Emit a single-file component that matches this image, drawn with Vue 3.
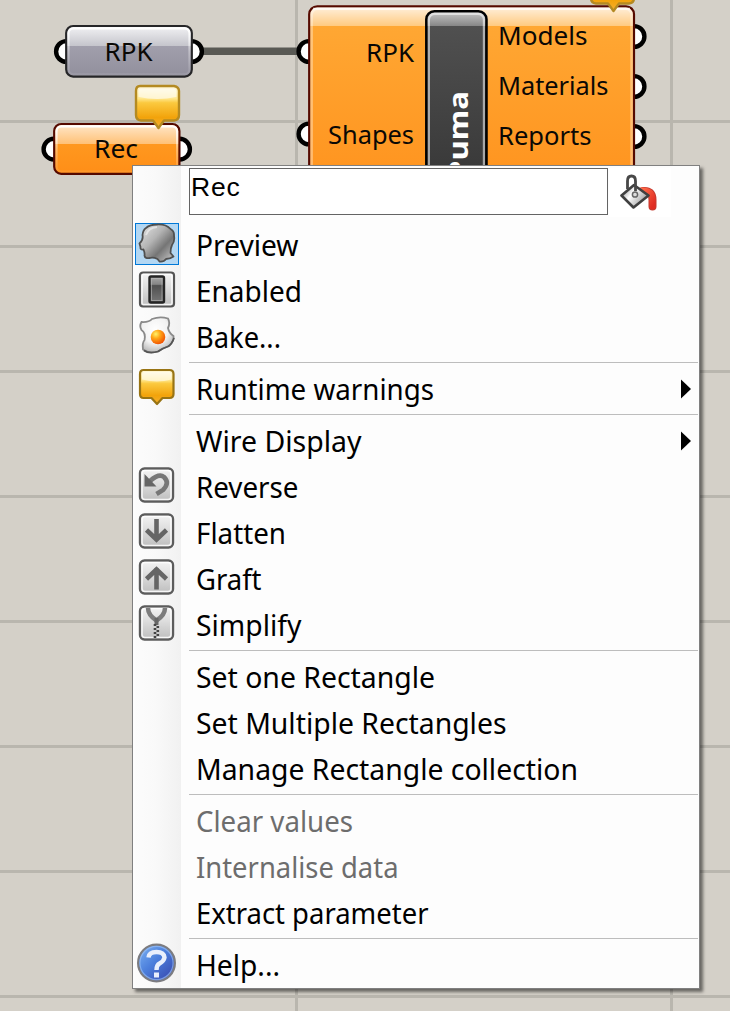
<script setup>
const gridRows = [121.5, 246.5, 371.5, 496.5, 621.5, 746.5, 871.5, 996.5]
const gridCols = [296.5, 671.5]
const ports = [
  [66.5, 51.5], [191.5, 51.5], [54, 149.2], [179.5, 149.2],
  [309, 51.5], [309, 134], [634, 36.5], [634, 86.5], [634, 136.5],
]
const groups = [
  [
    { text: 'Preview', end: 297.5, icon: 'head', checked: true },
    { text: 'Enabled', end: 301, icon: 'switch' },
    { text: 'Bake...', end: 280, icon: 'egg' },
  ],
  [{ text: 'Runtime warnings', end: 433, icon: 'balloon', sub: true }],
  [
    { text: 'Wire Display', end: 360.5, sub: true },
    { text: 'Reverse', end: 297.5, icon: 'reverse' },
    { text: 'Flatten', end: 285, icon: 'down' },
    { text: 'Graft', end: 260.5, icon: 'up' },
    { text: 'Simplify', end: 300.5, icon: 'zip' },
  ],
  [
    { text: 'Set one Rectangle', end: 434 },
    { text: 'Set Multiple Rectangles', end: 505.5 },
    { text: 'Manage Rectangle collection', end: 577 },
  ],
  [
    { text: 'Clear values', end: 352, off: true },
    { text: 'Internalise data', end: 397.5, off: true },
    { text: 'Extract parameter', end: 427.5 },
  ],
  [{ text: 'Help...', end: 279, icon: 'help' }],
]
</script>

<template>
  <main class="stage">
    <svg class="canvas" width="730" height="1011" viewBox="0 0 730 1011">
      <defs>
        <linearGradient id="grey" x2="0" y2="1">
          <stop offset="0" stop-color="#f3f3f5" /><stop offset=".4" stop-color="#c4c4cb" />
          <stop offset=".4" stop-color="#a19fac" /><stop offset="1" stop-color="#918f9c" />
        </linearGradient>
        <linearGradient id="orange" x2="0" y2="1">
          <stop offset="0" stop-color="#ffe8cc" /><stop offset=".4" stop-color="#ffc176" />
          <stop offset=".4" stop-color="#ff981f" /><stop offset="1" stop-color="#ff8e17" />
        </linearGradient>
        <linearGradient id="body" gradientUnits="userSpaceOnUse" x1="0" y1="6" x2="0" y2="180">
          <stop offset="0" stop-color="#fff2e1" /><stop offset=".115" stop-color="#ffca80" />
          <stop offset=".115" stop-color="#ffa733" /><stop offset="1" stop-color="#ff941f" />
        </linearGradient>
        <linearGradient id="dark" gradientUnits="userSpaceOnUse" x1="0" y1="12" x2="0" y2="180">
          <stop offset="0" stop-color="#c6c6c6" /><stop offset=".085" stop-color="#858585" />
          <stop offset=".085" stop-color="#505050" /><stop offset="1" stop-color="#383838" />
        </linearGradient>
        <linearGradient id="rim" x2="0" y2="1">
          <stop offset="0" stop-color="#fff" /><stop offset=".5" stop-color="#fff" stop-opacity=".35" /><stop offset="1" stop-color="#fff" stop-opacity=".08" />
        </linearGradient>
        <linearGradient id="gold" x2="0" y2="1">
          <stop offset="0" stop-color="#fff8dc" /><stop offset=".3" stop-color="#ffe68a" />
          <stop offset=".4" stop-color="#fbc93f" /><stop offset=".75" stop-color="#f2a30b" /><stop offset="1" stop-color="#f5b030" />
        </linearGradient>
        <linearGradient id="silver" x2="1" y2="1">
          <stop offset="0" stop-color="#e8e8e8" /><stop offset=".4" stop-color="#b4b4b4" /><stop offset=".65" stop-color="#757575" /><stop offset="1" stop-color="#d0d0d0" />
        </linearGradient>
        <linearGradient id="tile" x2="0" y2="1">
          <stop offset="0" stop-color="#f4f4f4" /><stop offset=".45" stop-color="#ddd" /><stop offset="1" stop-color="#bdbdbd" />
        </linearGradient>
        <linearGradient id="slot" x2="0" y2="1">
          <stop offset="0" stop-color="#aaa" /><stop offset=".3" stop-color="#858585" /><stop offset=".35" stop-color="#505050" /><stop offset="1" stop-color="#777" />
        </linearGradient>
        <radialGradient id="white" cx=".45" cy=".35" r=".65">
          <stop offset="0" stop-color="#fff" /><stop offset=".6" stop-color="#f2f2f2" /><stop offset="1" stop-color="#bbb" />
        </radialGradient>
        <linearGradient id="paint" x2="1" y2=".6">
          <stop offset="0" stop-color="#777" /><stop offset=".45" stop-color="#fff" /><stop offset="1" stop-color="#999" />
        </linearGradient>
        <radialGradient id="yolk" cx=".35" cy=".3" r=".75">
          <stop offset="0" stop-color="#fff36a" /><stop offset=".4" stop-color="#ffa817" /><stop offset="1" stop-color="#f04c00" />
        </radialGradient>
        <linearGradient id="blue" x2="1" y2="1">
          <stop offset="0" stop-color="#7fb6f5" /><stop offset=".45" stop-color="#4c7fdc" /><stop offset="1" stop-color="#3440a8" />
        </linearGradient>
        <linearGradient id="red" x2="1" y2="1">
          <stop offset="0" stop-color="#ff6a48" /><stop offset="1" stop-color="#e02c22" />
        </linearGradient>
      </defs>
      <g stroke="#b9b6ae" stroke-width="3">
        <path v-for="y in gridRows" :key="y" :d="`M0 ${y}H730`" />
        <path v-for="x in gridCols" :key="x" :d="`M${x} 0V1011`" />
      </g>
      <path d="M200 51.3H300" stroke="#595954" stroke-width="7.4" />
      <circle v-for="(p, i) in ports" :key="i" :cx="p[0]" :cy="p[1]" r="10.4" fill="#fff" stroke="#000" stroke-width="4.4" />

      <rect x="66.2" y="26" width="125.6" height="50.6" rx="7" fill="url(#grey)" stroke="#262628" stroke-width="2.2" />
      <rect x="68.5" y="28.3" width="121" height="46" rx="5" fill="none" stroke="url(#rim)" stroke-width="2.2" />
      <rect x="54.2" y="124" width="125.2" height="49.8" rx="7" fill="url(#orange)" stroke="#550a00" stroke-width="2.2" />
      <rect x="56.5" y="126.3" width="120.6" height="45.2" rx="5" fill="none" stroke="url(#rim)" stroke-width="2.2" />
      <rect x="309.2" y="6.3" width="324.8" height="190" rx="8" fill="url(#body)" stroke="#550a00" stroke-width="2.2" />
      <rect x="311.6" y="8.7" width="320" height="186" rx="6" fill="none" stroke="#fff" stroke-opacity=".36" stroke-width="2.6" />
      <path d="M313 8.8H630" stroke="#fff" stroke-width="2" opacity=".7" />
      <rect x="426.3" y="11.3" width="60.2" height="190" rx="8" fill="url(#dark)" stroke="#000" stroke-width="2.5" />
      <rect x="428.9" y="13.8" width="55" height="186" rx="6" fill="none" stroke="#fff" stroke-opacity=".55" stroke-width="2.2" />

      <g class="node-text">
        <text x="104.5" y="60.5" textLength="48" lengthAdjust="spacingAndGlyphs">RPK</text>
        <text x="94" y="158" textLength="44" lengthAdjust="spacingAndGlyphs">Rec</text>
        <text x="366" y="61.5" textLength="48" lengthAdjust="spacingAndGlyphs">RPK</text>
        <text x="328" y="144" textLength="86" lengthAdjust="spacingAndGlyphs">Shapes</text>
        <text x="498" y="45.3" textLength="89.500" lengthAdjust="spacingAndGlyphs">Models</text>
        <text x="498" y="95.3" textLength="110.500" lengthAdjust="spacingAndGlyphs">Materials</text>
        <text x="498" y="145.3" textLength="93.500" lengthAdjust="spacingAndGlyphs">Reports</text>
      </g>
      <text class="puma" transform="translate(467.6 180) rotate(-90)" textLength="89" lengthAdjust="spacingAndGlyphs">Puma</text>
      <g class="soft" fill="url(#gold)" stroke="#b48a22" stroke-width="2.4" stroke-linejoin="round">
        <path d="M140 86H174Q179 87 179 91V115Q179 120 174 120.5H164L158.5 128L153 120.5H141Q136 120 136 115V91Q136 86 140 86Z" />
        <path d="M594 -31H629Q634 -30 634 -26V-2Q634 3 629 3.5H619L613.5 11L608 3.5H596Q591 3 591 -2V-26Q591 -31 594 -31Z" />
      </g>
      <path d="M141 88.5H174Q176.5 89 176.5 92V97Q157 101 138.5 97V91Q138.5 88.5 141 88.5Z" fill="#fff" opacity=".6" />
    </svg>

    <section class="menu">
      <header class="head">
        <div class="field">Rec</div>
        <svg class="bucket" width="62" height="49" viewBox="609 168 62 49">
          <g class="soft">
            <path d="M643 191Q652.500 190 652.500 200V206.500" fill="none" stroke="#c43a30" stroke-width="8" stroke-linecap="round" />
            <path d="M641 190.500Q652.500 189.500 652.500 200V206.500" fill="none" stroke="url(#red)" stroke-width="6" stroke-linecap="round" />
            <path d="M634 185L648.500 195.500L633.500 207.500L621.500 195.500Z" fill="url(#paint)" stroke="#404040" stroke-width="2.600" stroke-linejoin="round" />
            <path d="M627.500 189V181Q627.500 176 631.500 176Q635.500 176 635.500 181V191" fill="none" stroke="#484848" stroke-width="2.800" />
            <circle cx="635" cy="194.500" r="2.600" fill="#ddd" stroke="#666" stroke-width="1.500" />
          </g>
        </svg>
      </header>
      <div v-for="(group, g) in groups" :key="g" class="group">
        <div v-for="item in group" :key="item.text" class="item" :class="{ off: item.off }">
          <div class="slot" :class="{ checked: item.checked }">
            <svg v-if="item.icon" class="soft" width="44" height="44" viewBox="0 0 44 44">
              <g v-if="item.icon === 'head'">
                <path d="M11 5Q15 1.500 22 1.500Q31 1 35.500 6Q39.500 8 39 13Q40 18 37 22Q35.500 25 35.500 30L38.500 33.500Q35 36 31 36Q29 39 24.500 38.500L22.500 36Q18 34 15 35Q10 36 9.500 32.500Q10 30 8.500 26.500Q5 27 5.500 24L4.500 20.500Q8.500 17 7.500 12Q8 7 11 5Z" fill="url(#silver)" stroke="#505050" stroke-width="1.800" stroke-linejoin="round" />
                <path d="M11 12Q13 5 22 4" fill="none" stroke="#eee" stroke-width="1.800" opacity=".7" />
              </g>
              <g v-else-if="item.icon === 'switch'">
                <rect x="5" y="3.500" width="34" height="34" rx="3" fill="url(#tile)" stroke="#555" stroke-width="2.200" />
                <rect x="7" y="5.500" width="30" height="30" rx="1.500" fill="none" stroke="#fff" stroke-width="1.600" opacity=".8" />
                <rect x="14.500" y="7.500" width="14.500" height="26" rx="1.500" fill="url(#slot)" stroke="#252525" stroke-width="2.400" />
                <rect x="16.500" y="9.500" width="10.500" height="22" fill="none" stroke="#bbb" stroke-width="1" opacity=".6" />
              </g>
              <g v-else-if="item.icon === 'egg'">
                <path d="M6.500 7Q14 7.500 17 4Q25 1 33 3.500Q35.500 8 33 13Q34 18 38.500 21Q39.500 26 34 31Q28 33 23 36.500Q14 39 8 34.500Q7 28 9.500 25Q11 18 6.500 15Q4 11 6.500 7Z" fill="url(#white)" stroke="#8a8a8a" stroke-width="1.800" />
                <path d="M39 23Q37 29 33 31.500Q28 33 23 36.500Q14 39 9 35.500" fill="none" stroke="#555" stroke-width="1.800" />
                <circle cx="23" cy="22" r="7.300" fill="url(#yolk)" />
              </g>
              <g v-else-if="item.icon === 'balloon'">
                <path d="M8.500 3H34.500Q38.500 3 38.500 7V27Q38.500 31 34.500 31H27.500L22 37L16.500 31H8.500Q5 31 5 27V7Q5 3 8.500 3Z" fill="url(#gold)" stroke="#987414" stroke-width="2.200" stroke-linejoin="round" />
                <path d="M9 5H34.500Q36.500 5.500 36.500 7.500V12.500Q22 16.500 7 12.500V7.500Q7 5 9 5Z" fill="#fff" opacity=".55" />
              </g>
              <g v-else-if="item.icon === 'help'">
                <circle cx="21.500" cy="20" r="18.400" fill="url(#blue)" stroke="#7c7c80" stroke-width="2.200" />
                <circle cx="21.500" cy="20" r="16.600" fill="none" stroke="#9bc0f5" stroke-width="1.200" opacity=".65" />
                <path d="M13.500 14.500Q14 9 21.500 9Q29 9 29.500 14.500Q29 18 24.500 20.500Q21.500 22 21.500 27" fill="none" stroke="#e9effc" stroke-width="4.400" />
                <rect x="19" y="29.500" width="5" height="5" fill="#e9effc" />
              </g>
              <g v-else>
                <rect x="5" y="3.500" width="33" height="33" rx="4.500" fill="url(#tile)" stroke="#5c5c5c" stroke-width="2.400" />
                <rect x="7" y="5.500" width="29" height="29" rx="3" fill="none" stroke="#fff" stroke-width="1.600" opacity=".85" />
                <g fill="none" stroke="#656565" stroke-width="4.600">
                  <path v-if="item.icon === 'down'" d="M21.500 8V29M11.500 19L21.500 28.500L31.500 19" />
                  <path v-if="item.icon === 'up'" d="M21.500 32.500V11M11.500 22L21.500 12.500L31.500 22" />
                  <g v-if="item.icon === 'reverse'">
                    <path d="M15 16Q24 8 29 12Q35 18 28 25L21.500 29" stroke="#777" />
                    <path d="M9.500 9V21.500H21.500Z" fill="#666" stroke="none" />
                  </g>
                  <g v-if="item.icon === 'zip'">
                    <path d="M13 5Q13 12 21.500 17.500Q30 12 30 5" stroke="#7c7c7c" stroke-width="4.500" />
                    <path d="M21.500 15V22" stroke="#666" stroke-width="4" />
                    <path d="M20 21V35" stroke="#444" stroke-width="2.600" stroke-dasharray="2 2" />
                    <path d="M22.800 23V35" stroke="#444" stroke-width="2.600" stroke-dasharray="2 2" />
                  </g>
                </g>
              </g>
            </svg>
          </div>
          <svg class="label" width="480" height="46">
            <text x="1" y="34" :textLength="item.end - 195" lengthAdjust="spacingAndGlyphs">{{ item.text }}</text>
          </svg>
          <svg v-if="item.sub" class="arrow" width="10" height="20" viewBox="0 0 10 20"><path d="M0 .5L10 10L0 19.500Z" /></svg>
        </div>
      </div>
    </section>
  </main>
</template>

<style>
body { margin: 0; overflow: hidden; }
</style>

<style scoped>
.stage { position: relative; width: 730px; height: 1011px; overflow: hidden; background: #d4d0c8; font-family: "Noto Sans", "Open Sans", sans-serif; }
.canvas { display: block; }
.soft { filter: blur(.45px); }
.node-text { font-size: 26px; fill: #0a0805; }
.puma { font: bold 27px "Noto Sans", sans-serif; fill: #fff; }
.menu {
  position: absolute; left: 132px; top: 165px; width: 568px; height: 824px; box-sizing: border-box;
  border: 1px solid #808080;
  background: linear-gradient(90deg, #fcfcfc, #f9f9f9 45%, #f1f1f1) 2px 0 / 46px 100% no-repeat, #fdfdfd;
  box-shadow: 3px 3px 3px rgba(0, 0, 0, .5);
}
.head { display: flex; gap: 1px; padding: 2px 0 0 56px; height: 54px; }
.field { box-sizing: border-box; width: 419px; height: 47px; border: 1px solid #646464; background: #fff; padding: 2px 0 0 1px; font: 26.5px/32px "Liberation Sans", sans-serif; letter-spacing: .8px; color: #000; }
.bucket { background: #fff; }
.group + .group { position: relative; padding-top: 6px; }
.group + .group::before { content: ""; position: absolute; top: 2px; left: 56px; right: 1px; height: 1px; background: #bdbdbd; }
.item { display: flex; height: 46px; }
.slot { box-sizing: border-box; width: 44px; height: 44px; margin: 1px 17px 0 2px; }
.slot svg { display: block; }
.slot.checked { height: 42px; background: #b3d7f3; border: 1px solid #0078d7; }
.slot.checked svg { margin: -1px; }
.label { flex: none; margin-left: -1px; font-size: 29px; fill: #000; }
.off .label { fill: #6d6d6d; }
.arrow { margin: 13px 0 0 6px; }
</style>
